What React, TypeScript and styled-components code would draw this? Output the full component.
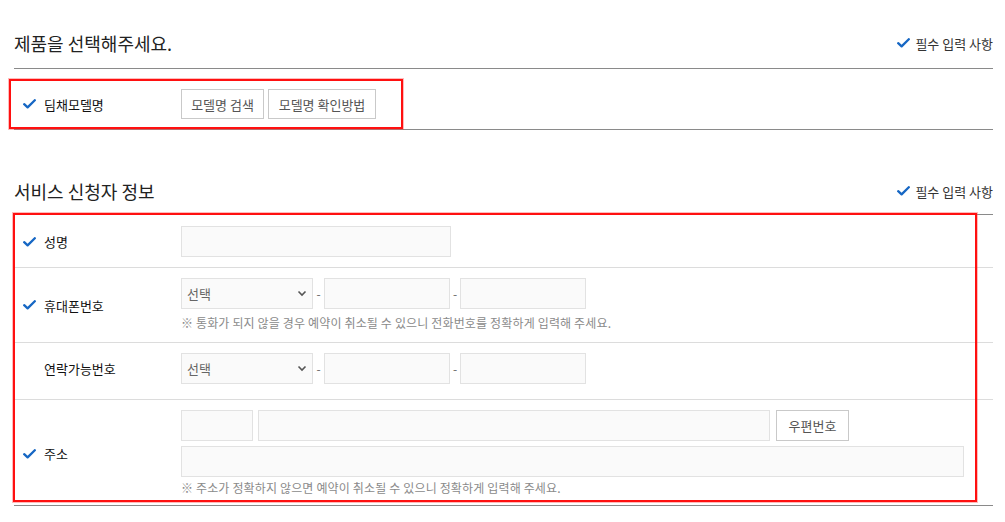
import React from "react";
import styled, { createGlobalStyle } from "styled-components";

const GlobalStyle = createGlobalStyle`
  html, body {
    margin: 0;
    padding: 0;
    background: #fff;
  }
  body {
    font-family: "Noto Sans CJK KR", "Noto Sans", sans-serif;
    color: #222;
  }
  * {
    box-sizing: border-box;
  }
`;

const Page = styled.div`
  width: 993px;
  padding-left: 14px;
`;

const Section = styled.section<{ $gap?: number }>`
  margin-top: ${(p) => p.$gap ?? 0}px;
`;

const SectionHead = styled.div<{ $top: number; $bottom: number }>`
  display: flex;
  align-items: center;
  justify-content: space-between;
  padding-top: ${(p) => p.$top}px;
  padding-bottom: ${(p) => p.$bottom}px;
  border-bottom: 1px solid #8a8a8a;
`;

const Title = styled.h2`
  margin: 0;
  font-size: 18px;
  font-weight: 400;
  line-height: 34px;
  color: #222;
`;

const Required = styled.span`
  display: flex;
  align-items: center;
  gap: 5px;
  font-size: 13px;
  color: #333;
`;

const Table = styled.div`
  position: relative;
  border-bottom: 1px solid #8a8a8a;
`;

const Row = styled.div<{ $top: number; $bottom: number; $last?: boolean }>`
  display: flex;
  align-items: center;
  padding-top: ${(p) => p.$top}px;
  padding-bottom: ${(p) => p.$bottom}px;
  border-bottom: ${(p) => (p.$last ? "none" : "1px solid #dcdcdc")};
`;

const Label = styled.div`
  width: 167px;
  flex: none;
  display: flex;
  align-items: center;
  padding-left: 9px;
  font-size: 13px;
  color: #111;
`;

const CheckSlot = styled.span`
  width: 21px;
  flex: none;
  display: flex;
  align-items: center;
`;

const Field = styled.div`
  display: flex;
  flex-direction: column;
  gap: 5px;
`;

const Line = styled.div<{ $gap?: number }>`
  display: flex;
  align-items: center;
  gap: ${(p) => p.$gap ?? 0}px;
`;

const Input = styled.div<{ $w: number }>`
  width: ${(p) => p.$w}px;
  height: 31px;
  background: #fafafa;
  border: 1px solid #e2e2e2;
`;

const Select = styled.div`
  width: 132px;
  height: 31px;
  display: flex;
  align-items: center;
  justify-content: space-between;
  padding: 0 5px 0 5px;
  background: #fafafa;
  border: 1px solid #e2e2e2;
  font-size: 13px;
  color: #666;
`;

const Dash = styled.span<{ $w: number }>`
  width: ${(p) => p.$w}px;
  text-align: center;
  font-size: 12px;
  color: #666;
`;

const Button = styled.button<{ $w: number }>`
  width: ${(p) => p.$w}px;
  height: 30px;
  padding: 0;
  background: #fff;
  border: 1px solid #c9c9c9;
  font-family: inherit;
  font-size: 13px;
  color: #555;
`;

const Note = styled.p`
  margin: 0;
  font-size: 12px;
  line-height: 18px;
  color: #8a8a8a;
  letter-spacing: 0.15px;
`;

const Highlight = styled.div<{ $l: number; $t: number; $w: number; $h: number }>`
  position: absolute;
  left: ${(p) => p.$l}px;
  top: ${(p) => p.$t}px;
  width: ${(p) => p.$w}px;
  height: ${(p) => p.$h}px;
  border: 2px solid #ff1010;
  box-shadow: 0 0 0 1px rgba(255, 60, 60, 0.35);
  pointer-events: none;
`;

const Check = () => (
  <svg width="13" height="10" viewBox="0 0 13 10">
    <polyline
      points="1.2,5.2 4.6,8.4 11.8,1.2"
      fill="none"
      stroke="#1667c4"
      strokeWidth="2.3"
      strokeLinecap="round"
      strokeLinejoin="round"
    />
  </svg>
);

const Chevron = () => (
  <svg width="10" height="7" viewBox="0 0 10 7">
    <polyline points="1.5,1.5 5,5 8.5,1.5" fill="none" stroke="#555" strokeWidth="1.6" />
  </svg>
);

const FieldLabel = ({ text, required = true }: { text: string; required?: boolean }) => (
  <Label>
    <CheckSlot>{required && <Check />}</CheckSlot>
    {text}
  </Label>
);

const PhoneLine = () => (
  <Line>
    <Select>
      선택
      <Chevron />
    </Select>
    <Dash $w={11}>-</Dash>
    <Input $w={126} />
    <Dash $w={10}>-</Dash>
    <Input $w={126} />
  </Line>
);

const Head = ({ title, top, bottom }: { title: string; top: number; bottom: number }) => (
  <SectionHead $top={top} $bottom={bottom}>
    <Title>{title}</Title>
    <Required>
      <Check />
      필수 입력 사항
    </Required>
  </SectionHead>
);

export default function App() {
  return (
    <>
      <GlobalStyle />
      <Page>
        <Section>
          <Head title="제품을 선택해주세요." top={26} bottom={8} />
          <Table>
            <Row $top={20} $bottom={10} $last>
              <FieldLabel text="딤채모델명" />
              <Line $gap={4}>
                <Button $w={83}>모델명 검색</Button>
                <Button $w={108}>모델명 확인방법</Button>
              </Line>
            </Row>
            <Highlight $l={-5} $t={10} $w={394} $h={50} />
          </Table>
        </Section>

        <Section $gap={30}>
          <Head title="서비스 신청자 정보" top={14} bottom={6} />
          <Table>
            <Row $top={11} $bottom={10}>
              <FieldLabel text="성명" />
              <Input $w={270} />
            </Row>
            <Row $top={10} $bottom={10}>
              <FieldLabel text="휴대폰번호" />
              <Field>
                <PhoneLine />
                <Note>※ 통화가 되지 않을 경우 예약이 취소될 수 있으니 전화번호를 정확하게 입력해 주세요.</Note>
              </Field>
            </Row>
            <Row $top={10} $bottom={15}>
              <FieldLabel text="연락가능번호" required={false} />
              <PhoneLine />
            </Row>
            <Row $top={10} $bottom={8} $last>
              <FieldLabel text="주소" />
              <Field>
                <Line>
                  <Input $w={72} />
                  <Input $w={512} style={{ marginLeft: 5 }} />
                  <Button $w={73} style={{ marginLeft: 6, height: 31 }}>
                    우편번호
                  </Button>
                </Line>
                <Input $w={783} />
                <Note style={{ marginTop: -3 }}>
                  ※ 주소가 정확하지 않으면 예약이 취소될 수 있으니 정확하게 입력해 주세요.
                </Note>
              </Field>
            </Row>
            <Highlight $l={-1} $t={-2} $w={964} $h={289} />
          </Table>
        </Section>
      </Page>
    </>
  );
}
